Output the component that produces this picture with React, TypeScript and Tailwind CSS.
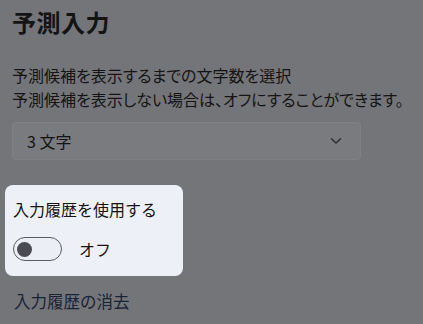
import React from 'react';

const jp = "font-['Segoe_UI','Noto_Sans_CJK_JP',sans-serif]";

function Chevron() {
  return (
    <svg width="12" height="8" viewBox="0 0 12 8" fill="none" className="shrink-0">
      <path d="M1.5 1.75 L6 6 L10.5 1.75" stroke="#2b2c30" strokeWidth="1.4" strokeLinecap="round" strokeLinejoin="round" />
    </svg>
  );
}

function Toggle() {
  return (
    <div className="flex items-center w-[49px] h-[24px] rounded-full border border-[#5b5c62] bg-[#eceef5] pl-[3px]">
      <div className="w-[15px] h-[15px] rounded-full bg-[#4b4c52]" />
    </div>
  );
}

export default function App() {
  return (
    <div className={`${jp} min-h-[324px] w-full overflow-hidden bg-[#747579] pl-3 text-[#141414]`}>
      {/* 見出し */}
      <h1 className="pt-[6px] text-[24px] font-bold leading-[32px] tracking-[0.5px] [font-feature-settings:'palt']">予測入力</h1>

      <p className="mt-[25px] text-[16px] leading-[24px] whitespace-nowrap [font-feature-settings:'palt']">
        予測候補を表示するまでの文字数を選択
        <br />
        予測候補を表示しない場合は、オフにすることができます。
      </p>

      {/* ドロップダウン */}
      <div className="mt-[11px] flex h-[38px] w-[349px] items-center justify-between rounded-[4px] border border-[#808186] bg-[#7a7b7f] pl-[14px] pr-[18px] text-[16px]">
        <span>3 文字</span>
        <Chevron />
      </div>

      {/* 入力履歴 */}
      <div className="mt-[25px] -ml-[7px] w-[178px] h-[91px] rounded-[8px] bg-[#eef0f7] pl-[8px] pt-[12px]">
        <div className="text-[16px] leading-[24px]">入力履歴を使用する</div>
        <div className="mt-[16px] flex items-center gap-[17px]">
          <Toggle />
          <span className="text-[16px] leading-[24px]">オフ</span>
        </div>
      </div>

      <div className="mt-[13px] pl-[2px] text-[16.5px] leading-[24px] text-[#1a2335]">入力履歴の消去</div>
    </div>
  );
}
